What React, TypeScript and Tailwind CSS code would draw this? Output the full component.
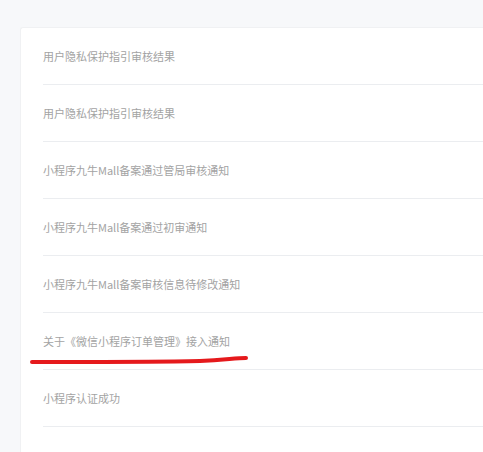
const items = [
  "用户隐私保护指引审核结果",
  "用户隐私保护指引审核结果",
  "小程序九牛Mall备案通过管局审核通知",
  "小程序九牛Mall备案通过初审通知",
  "小程序九牛Mall备案审核信息待修改通知",
  "关于《微信小程序订单管理》接入通知",
  "小程序认证成功",
];

export default function App() {
  return (
    <div
      className="relative h-[452px] w-[483px] overflow-hidden bg-[#f7f8fa] pl-[20px] pt-[27px]"
      style={{ fontFamily: '"Noto Sans CJK SC", "Noto Sans", sans-serif' }}
    >
      <div className="h-full rounded-tl-[3px] border-l border-t border-[#f0f1f3] bg-white pl-[22px]">
        {items.map((t, i) => (
          <div
            key={i}
            className="flex h-[57px] items-center border-b border-[#ebedf0] text-[11px] text-[#a3a3a3]"
          >
            <span>{t}</span>
          </div>
        ))}
      </div>
      <svg
        className="pointer-events-none absolute left-0 top-0"
        width="483"
        height="452"
      >
        <path
          d="M32 362 C 90 362, 160 362, 200 361 C 225 360, 235 358, 246 358"
          stroke="#e5191c"
          strokeWidth="4"
          strokeLinecap="round"
          fill="none"
        />
      </svg>
    </div>
  );
}
